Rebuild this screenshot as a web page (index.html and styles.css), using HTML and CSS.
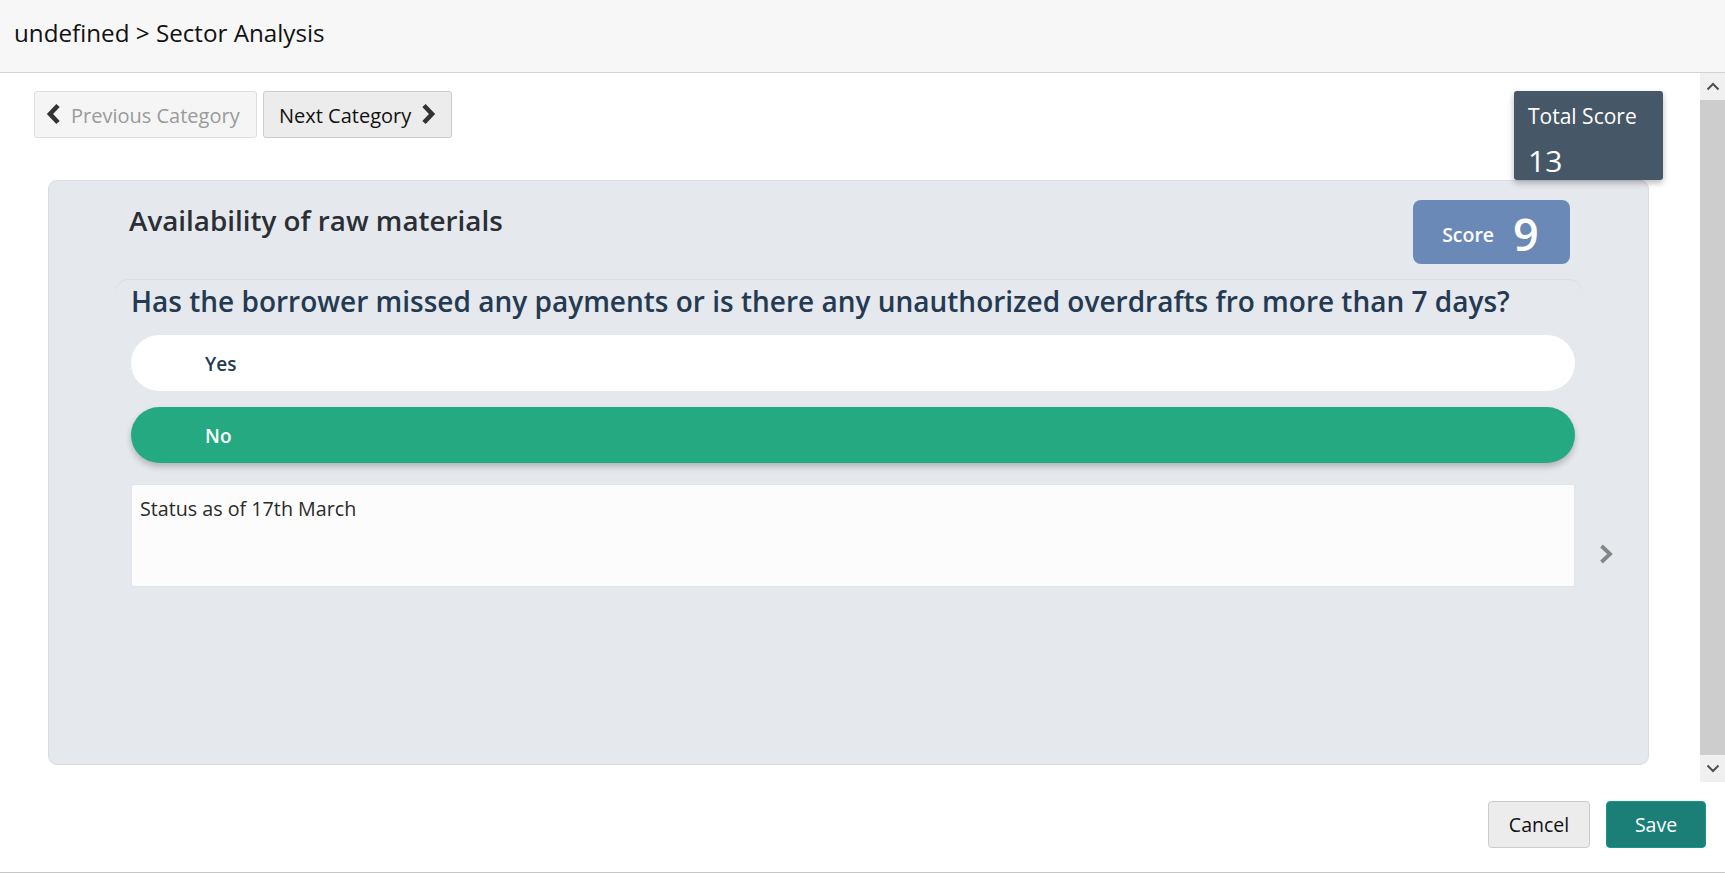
FILE: index.html
```html
<!DOCTYPE html>
<html lang="en">
<head>
<meta charset="utf-8">
<title>Sector Analysis</title>
<link rel="stylesheet" href="styles.css">
</head>
<body>
<div class="app">
  <header class="header">
    <h1 class="crumb">undefined &gt; Sector Analysis</h1>
  </header>
  <div class="viewport">
    <main class="content">
      <div class="top-row">
        <div class="nav">
          <button class="nav-btn prev" type="button">
            <svg class="chev" width="16" height="24" viewBox="0 0 16 24"><polyline points="12,3.5 4,12 12,20.5" fill="none" stroke="#333" stroke-width="4.6" stroke-linejoin="miter"/></svg>
            <span>Previous Category</span>
          </button>
          <button class="nav-btn next" type="button">
            <span>Next Category</span>
            <svg class="chev" width="16" height="24" viewBox="0 0 16 24"><polyline points="4,3.5 12,12 4,20.5" fill="none" stroke="#333" stroke-width="4.6" stroke-linejoin="miter"/></svg>
          </button>
        </div>
        <div class="total">
          <div class="total-label">Total Score</div>
          <div class="total-value">13</div>
        </div>
      </div>
      <section class="card">
        <div class="card-head">
          <h2 class="card-title">Availability of raw materials</h2>
          <div class="score">
            <span class="score-label">Score</span>
            <span class="score-value">9</span>
          </div>
        </div>
        <div class="card-body">
          <div class="question">
            <h3 class="q-text">Has the borrower missed any payments or is there any unauthorized overdrafts fro more than 7 days?</h3>
            <div class="options">
              <div class="option">Yes</div>
              <div class="option selected">No</div>
            </div>
            <div class="comment">Status as of 17th March</div>
          </div>
          <div class="next-q">
            <svg width="18" height="24" viewBox="0 0 18 24"><polyline points="4.5,4 13,12 4.5,20" fill="none" stroke="#858585" stroke-width="3.8"/></svg>
          </div>
        </div>
      </section>
    </main>
    <div class="scrollbar">
      <div class="sb-btn">
        <svg width="14" height="9" viewBox="0 0 14 9"><polyline points="1.5,7.5 7,2 12.5,7.5" fill="none" stroke="#505050" stroke-width="2"/></svg>
      </div>
      <div class="sb-track"><div class="sb-thumb"></div></div>
      <div class="sb-btn">
        <svg width="14" height="9" viewBox="0 0 14 9"><polyline points="1.5,1.5 7,7 12.5,1.5" fill="none" stroke="#505050" stroke-width="2"/></svg>
      </div>
    </div>
  </div>
  <footer class="footer">
    <button class="btn cancel" type="button">Cancel</button>
    <button class="btn save" type="button">Save</button>
  </footer>
</div>
</body>
</html>
```

FILE: styles.css
```css
* { box-sizing: border-box; }
html, body { margin: 0; padding: 0; }
body {
  font-family: "Open Sans", "Noto Sans", "Liberation Sans", sans-serif;
  background: #ffffff;
  color: #111;
  width: 1725px;
  height: 873px;
  overflow: hidden;
}
.app {
  display: flex;
  flex-direction: column;
  height: 873px;
  border-bottom: 1px solid #c6c6c6;
}
.header {
  height: 73px;
  flex: none;
  background: #f7f7f7;
  border-bottom: 1px solid #d2d2d2;
  display: flex;
  align-items: center;
  padding: 0 0 7px 14px;
}
.crumb {
  margin: 0;
  font-size: 24.2px;
  font-weight: 400;
  color: #111;
}
.viewport {
  height: 709px;
  flex: none;
  display: flex;
}
.content {
  flex: 1;
  min-width: 0;
}
.top-row {
  display: flex;
  justify-content: space-between;
  align-items: flex-start;
  padding: 18px 37px 0 34px;
  height: 107px;
}
.nav {
  display: flex;
  gap: 6px;
}
.nav-btn {
  height: 47px;
  display: flex;
  align-items: center;
  gap: 9px;
  font-family: inherit;
  font-size: 20px;
  border-radius: 3px;
  cursor: pointer;
  padding-top: 3px;
}
.nav-btn.prev {
  width: 223px;
  padding-left: 11px;
  padding-right: 0;
  background: #f5f5f5;
  border: 1px solid #dedede;
  color: #9a9a9a;
}
.nav-btn.next {
  width: 189px;
  padding-left: 15px;
  padding-right: 0;
  background: #ececec;
  border: 1px solid #cbcbcb;
  color: #111;
}
.chev { flex: none; margin-top: -3px; }
.total {
  width: 149px;
  height: 89px;
  background: #465868;
  border-radius: 3px;
  color: #fff;
  padding: 10px 0 0 14px;
  box-shadow: 0 3px 6px rgba(0,0,0,0.28);
}
.total-label {
  font-size: 21px;
  line-height: 30px;
}
.total-value {
  font-size: 30px;
  line-height: 40px;
  margin-top: 10px;
}
.card {
  margin: 0 51px 0 48px;
  height: 585px;
  background: #e5e8ed;
  border: 1px solid #d9dde2;
  border-radius: 9px;
}
.card-head {
  display: flex;
  justify-content: space-between;
  align-items: flex-start;
  padding: 19px 78px 0 80px;
  height: 99px;
}
.card-title {
  margin: 3px 0 0;
  font-size: 27.8px;
  line-height: 34px;
  font-weight: 600;
  color: #2b2f35;
}
.score {
  width: 157px;
  height: 64px;
  background: #6b89b6;
  border-radius: 8px;
  display: flex;
  align-items: center;
  justify-content: center;
  gap: 19px;
  padding-right: 2px;
  color: #fff;
}
.score-label {
  font-size: 19.5px;
  font-weight: 600;
  margin-top: 4px;
}
.score-value {
  font-size: 45px;
  font-weight: 600;
  line-height: 1;
  margin-top: 2px;
}
.card-body {
  display: flex;
  align-items: flex-start;
}
.question {
  margin-left: 66px;
  width: 1467px;
  padding: 3px 7px 0 16px;
  border-radius: 14px;
  box-shadow: 0 -1px 1px rgba(0,0,0,0.05);
}
.q-text {
  margin: 0;
  font-size: 28px;
  line-height: 37px;
  font-weight: 600;
  color: #243a52;
}
.options {
  margin-top: 15px;
  display: flex;
  flex-direction: column;
  gap: 16px;
}
.option {
  height: 56px;
  border-radius: 28px;
  background: #ffffff;
  padding-left: 74px;
  padding-top: 2px;
  display: flex;
  align-items: center;
  font-size: 19px;
  font-weight: 600;
  color: #243a52;
}
.option.selected {
  background: #25a981;
  color: #fff;
  box-shadow: 0 4px 6px rgba(0,0,0,0.22);
}
.comment {
  margin-top: 21px;
  height: 103px;
  background: #fcfcfc;
  border: 1px solid #e2e4e8;
  border-radius: 2px;
  padding: 11px 8px;
  font-size: 19.7px;
  line-height: 26px;
  color: #2a2a2a;
}
.next-q {
  flex: 1;
  display: flex;
  justify-content: center;
  margin-top: 262px;
  padding-right: 18px;
}
.scrollbar {
  width: 25px;
  flex: none;
  display: flex;
  flex-direction: column;
  background: #f0f0f0;
}
.sb-btn {
  height: 27px;
  flex: none;
  display: flex;
  align-items: center;
  justify-content: center;
}
.sb-track {
  flex: 1;
}
.sb-thumb {
  height: 100%;
  background: #cdcdcd;
}
.footer {
  flex: 1;
  display: flex;
  justify-content: flex-end;
  align-items: flex-start;
  gap: 16px;
  padding: 19px 19px 0 0;
}
.btn {
  height: 47px;
  font-family: inherit;
  font-size: 19.5px;
  border-radius: 4px;
  cursor: pointer;
}
.btn.cancel {
  width: 102px;
  background: #ececec;
  border: 1px solid #cbcbcb;
  color: #111;
}
.btn.save {
  width: 100px;
  background: #1b7f78;
  border: 1px solid #13998e;
  color: #fff;
}
```
